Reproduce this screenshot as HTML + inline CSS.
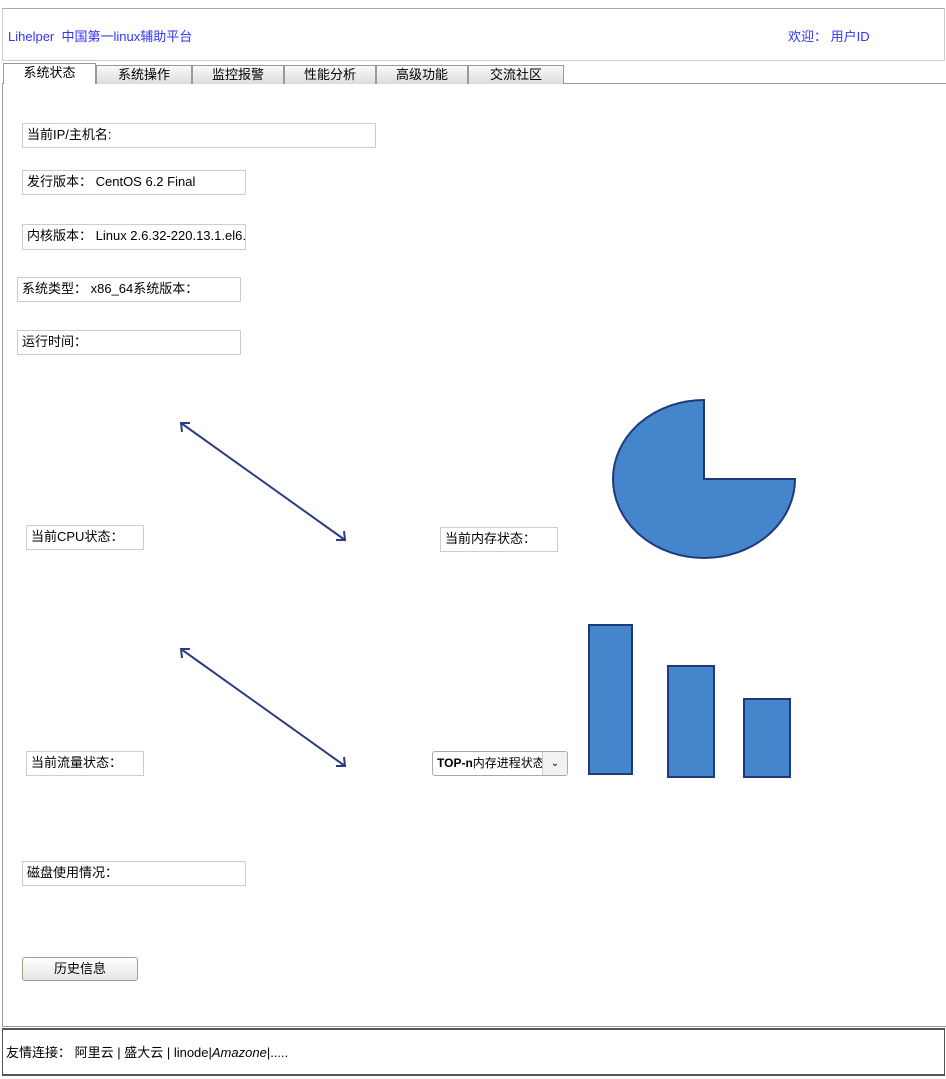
<!DOCTYPE html>
<html><head><meta charset="utf-8"><style>
body{margin:0;width:946px;height:1079px;background:#fff;position:relative;font-family:"Liberation Sans","Noto Sans CJK SC",sans-serif;font-size:13px;color:#000;overflow:hidden}
.a{position:absolute;box-sizing:border-box}
.box{border:1px solid #ccc;padding-left:4px;line-height:22px;white-space:nowrap;overflow:hidden;font-size:13px}
.tab{position:absolute;top:65px;height:19px;box-sizing:border-box;border:1px solid #999;border-bottom:none;background:linear-gradient(#fafafa,#dcdcdc);text-align:center;line-height:17px;font-size:13px}
</style></head><body>
<div class="a" style="left:2px;top:8px;width:943px;height:53px;border:1px solid #ccc;border-top-color:#aaa"></div>
<div class="a" style="left:8px;top:26px;color:#33f;font-size:13px">Lihelper&nbsp;&nbsp;中国第一linux辅助平台</div>
<div class="a" style="left:788px;top:26px;color:#33f;font-size:13px">欢迎：&nbsp;用户ID</div>
<div class="a" style="left:2px;top:83px;width:945px;height:944px;border:1px solid #999"></div>
<div class="tab" style="left:3px;width:93px;top:63px;height:21px;background:#fff;border-color:#999">系统状态</div>
<div class="tab" style="left:96px;width:96px">系统操作</div>
<div class="tab" style="left:192px;width:92px">监控报警</div>
<div class="tab" style="left:284px;width:92px">性能分析</div>
<div class="tab" style="left:376px;width:92px">高级功能</div>
<div class="tab" style="left:468px;width:96px">交流社区</div>
<div class="a box" style="left:22px;top:123px;width:354px;height:25px">当前IP/主机名:</div>
<div class="a box" style="left:22px;top:170px;width:224px;height:25px">发行版本：&nbsp;CentOS 6.2 Final</div>
<div class="a box" style="left:22px;top:224px;width:224px;height:26px">内核版本：&nbsp;Linux 2.6.32-220.13.1.el6.x86_64</div>
<div class="a box" style="left:17px;top:277px;width:224px;height:25px">系统类型：&nbsp;x86_64系统版本：</div>
<div class="a box" style="left:17px;top:330px;width:224px;height:25px">运行时间：</div>
<div class="a box" style="left:26px;top:525px;width:118px;height:25px">当前CPU状态：</div>
<div class="a box" style="left:440px;top:527px;width:118px;height:25px">当前内存状态：</div>
<div class="a box" style="left:26px;top:751px;width:118px;height:25px">当前流量状态：</div>
<div class="a box" style="left:22px;top:861px;width:224px;height:25px">磁盘使用情况：</div>
<div class="a" style="left:432px;top:751px;width:136px;height:25px;border:1px solid #aaa;border-radius:3px;line-height:23px;padding-left:4px;font-size:12px;white-space:nowrap;overflow:hidden"><b>TOP-n</b>内存进程状态<span style="position:absolute;right:0;top:0;width:24px;height:23px;border-left:1px solid #ccc;background:#f2f2f2;text-align:center;font-size:10px">&#8964;</span></div>
<div class="a" style="left:22px;top:957px;width:116px;height:24px;border:1px solid #a89c88;border-radius:3px;background:linear-gradient(#fff,#e6e6e6);text-align:center;line-height:22px">历史信息</div>
<div class="a" style="left:2px;top:1028px;width:943px;height:48px;border:2px solid #555;border-width:2px 1px 2px 1px;line-height:46px;padding-left:3px">友情连接：&nbsp;阿里云 | 盛大云 | linode|<i>Amazone</i>|.....</div>
<svg class="a" style="left:0;top:0" width="946" height="1079">
<g stroke="#2b3c85" stroke-width="2" fill="none">
<line x1="181" y1="423" x2="345" y2="540"/><polyline points="182,432 181,423 190,423"/><polyline points="336,540 345,540 344,531"/>
<line x1="181" y1="649" x2="345" y2="766"/><polyline points="182,658 181,649 190,649"/><polyline points="336,766 345,766 344,757"/>
</g>
<path d="M704,479 L704,400 A91,79 0 1,0 795,479 Z" fill="#4485cc" stroke="#1f3a7a" stroke-width="2"/>
<g fill="#4485cc" stroke="#1f3a7a" stroke-width="2">
<rect x="589" y="625" width="43" height="149"/><rect x="668" y="666" width="46" height="111"/><rect x="744" y="699" width="46" height="78"/>
</g>
</svg>
</body></html>
